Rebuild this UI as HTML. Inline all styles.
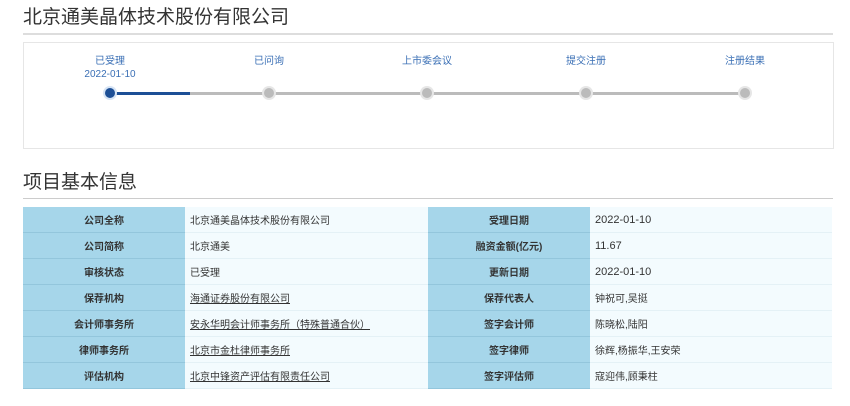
<!DOCTYPE html>
<html><head><meta charset="utf-8"><style>
body{margin:0;width:850px;height:406px;background:#fff;font-family:"Liberation Sans","Noto Sans CJK SC",sans-serif;position:relative;overflow:hidden}
.h{position:absolute;left:23px;font-size:19px;color:#333;line-height:22px}
.rule{position:absolute;left:23px;width:810px;height:2px;background:#ddd}
.box{position:absolute;left:23px;top:42px;width:809px;height:105px;border:1px solid #e6e6e6}
.st{position:absolute;top:55px;font-size:10px;color:#3a6fb5;text-align:center;width:100px;margin-left:-50px;line-height:13px}
.dot{position:absolute;top:88px;width:10px;height:10px;border-radius:50%;background:#bbb;margin-left:-5px;box-shadow:0 0 0 2px #e6e6e6}
table{position:absolute;left:23px;top:207px;width:809px;border-collapse:collapse;font-size:10px}
td{height:25px;border-bottom:1px solid #e4f1f6;padding:0;vertical-align:middle}
td.l{background:#a6d6ea;text-align:center;font-weight:bold;color:#333;border-bottom:1px solid #93c6dc}
td.v{background:#f3fbfe;color:#333;padding-left:5px}
td.n{font-size:11px}
u{color:#333}
</style></head><body>
<div class="h" style="top:7px">北京通美晶体技术股份有限公司</div>
<div class="rule" style="top:33px"></div>
<div class="box"></div>
<div style="position:absolute;left:110px;top:92px;width:635px;height:3px;background:#bbb"></div>
<div style="position:absolute;left:110px;top:92px;width:80px;height:3px;background:#1d4f96"></div>
<div class="st" style="left:110px">已受理<br>2022-01-10</div>
<div class="st" style="left:269px">已问询</div>
<div class="st" style="left:427px">上市委会议</div>
<div class="st" style="left:586px">提交注册</div>
<div class="st" style="left:745px">注册结果</div>
<div class="dot" style="left:110px;background:#1d4f96;box-shadow:0 0 0 2px #d6e4f5"></div>
<div class="dot" style="left:269px"></div>
<div class="dot" style="left:427px"></div>
<div class="dot" style="left:586px"></div>
<div class="dot" style="left:745px"></div>
<div class="h" style="top:172px">项目基本信息</div>
<div class="rule" style="top:198px;height:1px;background:#ccc"></div>
<table>
<colgroup><col style="width:162px"><col style="width:243px"><col style="width:162px"><col></colgroup>
<tr><td class="l">公司全称</td><td class="v">北京通美晶体技术股份有限公司</td><td class="l">受理日期</td><td class="v n">2022-01-10</td></tr>
<tr><td class="l">公司简称</td><td class="v">北京通美</td><td class="l">融资金额(亿元)</td><td class="v n">11.67</td></tr>
<tr><td class="l">审核状态</td><td class="v">已受理</td><td class="l">更新日期</td><td class="v n">2022-01-10</td></tr>
<tr><td class="l">保荐机构</td><td class="v"><u>海通证券股份有限公司</u></td><td class="l">保荐代表人</td><td class="v">钟祝可,吴挺</td></tr>
<tr><td class="l">会计师事务所</td><td class="v"><u>安永华明会计师事务所（特殊普通合伙）</u></td><td class="l">签字会计师</td><td class="v">陈晓松,陆阳</td></tr>
<tr><td class="l">律师事务所</td><td class="v"><u>北京市金杜律师事务所</u></td><td class="l">签字律师</td><td class="v">徐辉,杨振华,王安荣</td></tr>
<tr><td class="l">评估机构</td><td class="v"><u>北京中锋资产评估有限责任公司</u></td><td class="l">签字评估师</td><td class="v">寇迎伟,顾秉柱</td></tr>
</table>
</body></html>
